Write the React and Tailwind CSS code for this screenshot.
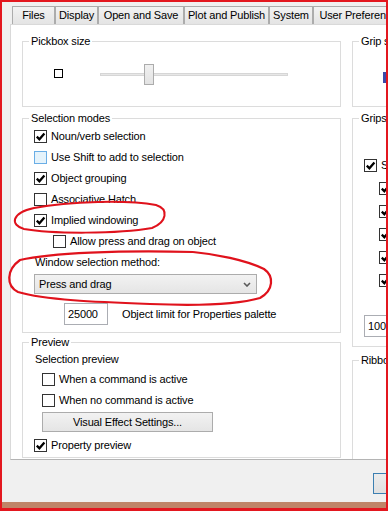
import React from "react";

const Check = () => (
  <svg width="11" height="11" viewBox="0 0 11 11">
    <path d="M1.8 5.6 L4.4 8.2 L9.4 2.4" fill="none" stroke="#000" strokeWidth="2.3" />
  </svg>
);

const Checkbox = ({ checked, hover }) => (
  <span
    className={
      hover
        ? "flex h-[13px] w-[13px] shrink-0 items-center justify-center border border-[#6aaee6] bg-[#e5f3fb]"
        : "flex h-[13px] w-[13px] shrink-0 items-center justify-center border border-[#333333] bg-white"
    }
  >
    {checked && <Check />}
  </span>
);

const CheckRow = ({ checked, hover, label, className = "" }) => (
  <div className={`flex h-[21px] items-center gap-[4px] whitespace-nowrap ${className}`}>
    <Checkbox checked={checked} hover={hover} />
    {label && <span>{label}</span>}
  </div>
);

const Group = ({ title, className = "", children }) => (
  <fieldset className={`min-w-0 border border-[#dcdcdc] ${className}`}>
    <legend className="ml-[6px] px-[2px] leading-[13px] whitespace-nowrap">{title}</legend>
    {children}
  </fieldset>
);

const Tab = ({ label, w }) => (
  <div
    className={`flex h-[18px] shrink-0 items-center justify-center whitespace-nowrap border border-b-0 border-[#acacac] bg-gradient-to-b from-[#f2f2f2] to-[#e4e4e4] ${w}`}
  >
    {label}
  </div>
);

const App = () => {
  return (
    <div className="relative h-[511px] w-[388px] overflow-hidden border-2 border-b-[3px] border-[#e3171f] bg-[#f0f0f0] font-['Liberation_Sans',Arial,sans-serif] text-[11px] tracking-[-0.15px] text-black">
      {/* Tabs */}
      <div className="flex pt-[4px] pl-[10px]">
        <Tab label="Files" w="w-[43px]" />
        <Tab label="Display" w="w-[43px]" />
        <Tab label="Open and Save" w="w-[86px]" />
        <Tab label="Plot and Publish" w="w-[85px]" />
        <Tab label="System" w="w-[44px]" />
        <Tab label="User Preferences" w="w-[96px]" />
      </div>

      {/* Tab panel */}
      <div className="ml-[8px] h-[436px] w-[440px] overflow-hidden border border-r-0 border-[#d9d9d9] border-b-[#b4b4b4] bg-white">
        <div className="flex items-start gap-[11px] pt-[10px] pl-[11px]">
          {/* Left column */}
          <div className="w-[319px] shrink-0">
            <Group title="Pickbox size">
              <div className="flex h-[58px] items-start pt-[16px] pl-[31px]">
                <span className="mt-[5px] h-[9px] w-[9px] border border-black" />
                <div className="relative ml-[37px] h-[21px] w-[188px]">
                  <div className="mt-[9px] h-[3px] w-full border border-[#d6d6d6] bg-[#e7e7e7]" />
                  <div className="absolute top-0 left-[44px] h-[21px] w-[10px] border border-[#acacac] bg-gradient-to-b from-[#f0f0f0] to-[#e3e3e3]" />
                </div>
              </div>
            </Group>

            <Group title="Selection modes" className="mt-[5px]">
              <div className="pt-[1px] pb-[7px]">
                <CheckRow className="pl-[11px]" checked label="Noun/verb selection" />
                <CheckRow className="pl-[11px]" hover label="Use Shift to add to selection" />
                <CheckRow className="pl-[11px]" checked label="Object grouping" />
                <CheckRow className="pl-[11px]" label="Associative Hatch" />
                <CheckRow className="pl-[11px]" checked label="Implied windowing" />
                <CheckRow className="pl-[30px]" label="Allow press and drag on object" />
                <div className="h-[21px] pl-[12px] leading-[21px]">Window selection method:</div>
                <div className="mt-[1px] ml-[11px] flex h-[20px] w-[223px] items-center justify-between border border-[#acacac] bg-gradient-to-b from-[#f2f2f2] to-[#e5e5e5] pr-[5px] pl-[4px]">
                  <span>Press and drag</span>
                  <svg width="8" height="5" viewBox="0 0 8 5">
                    <path d="M1 1 L4 4 L7 1" fill="none" stroke="#5a5a5a" strokeWidth="1.6" />
                  </svg>
                </div>
                <div className="mt-[9px] flex items-center pl-[41px]">
                  <div className="flex h-[22px] w-[44px] items-center border border-[#abadb3] bg-white pl-[3px]">
                    25000
                  </div>
                  <span className="ml-[14px] whitespace-nowrap">Object limit for Properties palette</span>
                </div>
              </div>
            </Group>

            <Group title="Preview" className="mt-[3px]">
              <div className="pb-[1px]">
                <div className="h-[20px] pl-[12px] leading-[20px]">Selection preview</div>
                <CheckRow className="pl-[19px]" label="When a command is active" />
                <CheckRow className="pl-[19px]" label="When no command is active" />
                <div className="mt-[1px] ml-[19px] flex h-[20px] w-[171px] items-center justify-center border border-[#acacac] bg-gradient-to-b from-[#f2f2f2] to-[#e5e5e5]">
                  Visual Effect Settings...
                </div>
                <CheckRow className="mt-[3px] pl-[11px]" checked label="Property preview" />
              </div>
            </Group>
          </div>

          {/* Right column */}
          <div className="w-[140px] shrink-0">
            <Group title="Grip size">
              <div className="h-[58px] pt-[24px] pl-[30px]">
                <div className="h-[11px] w-[11px] bg-[#3b4aa8]" />
              </div>
            </Group>

            <Group title="Grips" className="mt-[5px]">
              <div className="pt-[30px] pb-[9px]">
                <CheckRow className="pl-[11px]" checked label="Show grips" />
                <div className="mt-[1px]">
                  {["Show grips within blocks", "Show grip tips", "Show dynamic grip menu", "Allow Ctrl+cycling", "Show single grip"].map((t) => (
                    <div key={t} className="flex h-[23px] items-center gap-[4px] pl-[26px] whitespace-nowrap">
                      <Checkbox checked />
                      <span>{t}</span>
                    </div>
                  ))}
                </div>
                <div className="mt-[23px] ml-[11px] flex h-[22px] w-[60px] items-center border border-[#abadb3] bg-white pl-[3px]">
                  1000
                </div>
              </div>
            </Group>

            <Group title="Ribbon options" className="mt-[7px]">
              <div className="h-[110px]" />
            </Group>
          </div>
        </div>
      </div>

      {/* Footer */}
      <div className="h-[42px] pt-[13px]">
        <div className="ml-[371px] flex h-[21px] w-[75px] items-center justify-center border border-[#3c7fb1] bg-gradient-to-b from-[#ececec] to-[#e0e0e0]">
          OK
        </div>
      </div>
      <div className="h-[6px] bg-[#c08468]" />

      {/* Red annotations */}
      <svg
        className="pointer-events-none absolute -top-[2px] -left-[2px]"
        width="388"
        height="511"
        viewBox="0 0 388 511"
      >
        <path
          d="M34 208 C70 201 128 200 156 205 C169 209 167 222 152 228 C118 234 52 234 24 229 C10 225 11 213 34 208"
          fill="none"
          stroke="#e0121c"
          strokeWidth="2"
        />
        <path
          d="M193 252 C215 254 246 260 264 269 C274 276 274 290 260 298 C236 305 200 306 150 304 C95 302 45 300 18 292 C6 286 6 270 20 260 C50 253 120 250 193 252"
          fill="none"
          stroke="#e0121c"
          strokeWidth="2.2"
        />
      </svg>
    </div>
  );
};

export default App;
